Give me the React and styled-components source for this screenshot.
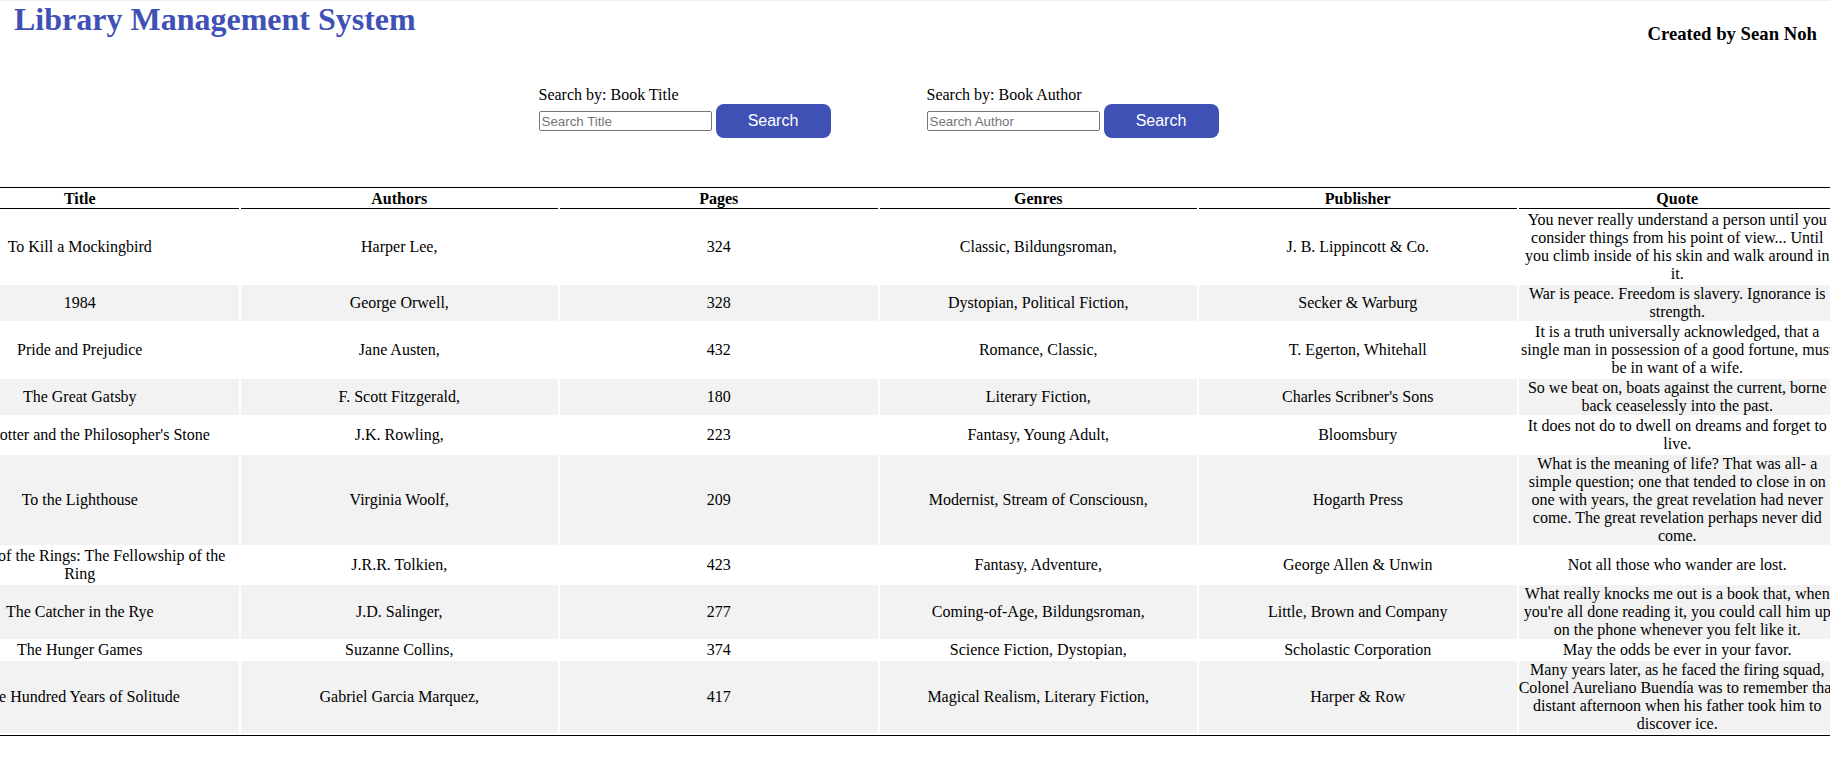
import React from "react";
import styled, { createGlobalStyle } from "styled-components";

const GlobalStyle = createGlobalStyle`
  html, body {
    margin: 0;
    padding: 0;
    overflow-x: hidden;
    background: #ffffff;
  }
  body {
    font-family: "Liberation Serif", "Times New Roman", serif;
    color: #000;
  }
`;

const Page = styled.div`
  border-top: 1px solid #eeeeee;
`;

const Header = styled.header`
  display: flex;
  justify-content: space-between;
  align-items: flex-start;
  padding: 0 13px 0 14px;
`;

const AppTitle = styled.h1`
  margin: 0;
  font-size: 32px;
  font-weight: bold;
  color: #3f51b5;
`;

const Credit = styled.h3`
  margin: 22px 0 0;
  font-size: 18.72px;
  font-weight: bold;
`;

const Content = styled.main`
  width: 1919px;
  margin-left: -81px;
`;

const SearchBar = styled.section`
  display: flex;
  justify-content: center;
  gap: 96px;
  margin-top: 41px;
`;

const SearchGroup = styled.div`
  display: flex;
  flex-direction: column;
`;

const Label = styled.label`
  font-size: 16px;
  line-height: 18px;
`;

const SearchRow = styled.div`
  display: flex;
  align-items: center;
  gap: 4px;
`;

const Input = styled.input`
  box-sizing: border-box;
  width: 173px;
  height: 20px;
  padding: 1px 2px;
  border: 1px solid #767676;
  border-radius: 2px;
  font-family: "Liberation Sans", Arial, sans-serif;
  font-size: 13.33px;
  &::placeholder {
    color: #757575;
  }
`;

const Button = styled.button`
  width: 115px;
  height: 34px;
  border: none;
  border-radius: 8px;
  background: #3f51b5;
  color: #ffffff;
  font-family: "Liberation Sans", Arial, sans-serif;
  font-size: 16px;
  cursor: pointer;
`;

const Table = styled.table`
  width: 100%;
  table-layout: fixed;
  border-spacing: 2px;
  margin-top: 49px;
  border-top: 1px solid #000;
  border-bottom: 1px solid #000;
  font-size: 16px;
  line-height: 18px;
`;

const Th = styled.th`
  padding: 0;
  font-weight: bold;
  border-bottom: 1px solid #000;
  text-align: center;
`;

const Row = styled.tr`
  &:nth-child(even) td {
    background: #f2f2f2;
  }
`;

const Td = styled.td`
  padding: 0;
  text-align: center;
  vertical-align: middle;
`;

const books = [
  ["To Kill a Mockingbird", "Harper Lee,", 324, "Classic, Bildungsroman,", "J. B. Lippincott & Co.", "You never really understand a person until you consider things from his point of view... Until you climb inside of his skin and walk around in it."],
  ["1984", "George Orwell,", 328, "Dystopian, Political Fiction,", "Secker & Warburg", "War is peace. Freedom is slavery. Ignorance is strength."],
  ["Pride and Prejudice", "Jane Austen,", 432, "Romance, Classic,", "T. Egerton, Whitehall", "It is a truth universally acknowledged, that a single man in possession of a good fortune, must be in want of a wife."],
  ["The Great Gatsby", "F. Scott Fitzgerald,", 180, "Literary Fiction,", "Charles Scribner's Sons", "So we beat on, boats against the current, borne back ceaselessly into the past."],
  ["Harry Potter and the Philosopher's Stone", "J.K. Rowling,", 223, "Fantasy, Young Adult,", "Bloomsbury", "It does not do to dwell on dreams and forget to live."],
  ["To the Lighthouse", "Virginia Woolf,", 209, "Modernist, Stream of Consciousn,", "Hogarth Press", "What is the meaning of life? That was all- a simple question; one that tended to close in on one with years, the great revelation had never come. The great revelation perhaps never did come."],
  ["The Lord of the Rings: The Fellowship of the Ring", "J.R.R. Tolkien,", 423, "Fantasy, Adventure,", "George Allen & Unwin", "Not all those who wander are lost."],
  ["The Catcher in the Rye", "J.D. Salinger,", 277, "Coming-of-Age, Bildungsroman,", "Little, Brown and Company", "What really knocks me out is a book that, when you're all done reading it, you could call him up on the phone whenever you felt like it."],
  ["The Hunger Games", "Suzanne Collins,", 374, "Science Fiction, Dystopian,", "Scholastic Corporation", "May the odds be ever in your favor."],
  ["One Hundred Years of Solitude", "Gabriel Garcia Marquez,", 417, "Magical Realism, Literary Fiction,", "Harper & Row", "Many years later, as he faced the firing squad, Colonel Aureliano Buendía was to remember that distant afternoon when his father took him to discover ice."],
];

const columns = ["Title", "Authors", "Pages", "Genres", "Publisher", "Quote"];

function SearchField({ label, placeholder }) {
  return (
    <SearchGroup>
      <Label>{label}</Label>
      <SearchRow>
        <Input placeholder={placeholder} />
        <Button>Search</Button>
      </SearchRow>
    </SearchGroup>
  );
}

export default function App() {
  return (
    <Page>
      <GlobalStyle />
      <Header>
        <AppTitle>Library Management System</AppTitle>
        <Credit>Created by Sean Noh</Credit>
      </Header>
      <Content>
        <SearchBar>
          <SearchField label="Search by: Book Title" placeholder="Search Title" />
          <SearchField label="Search by: Book Author" placeholder="Search Author" />
        </SearchBar>
        <Table>
          <thead>
            <tr>
              {columns.map((c) => (
                <Th key={c}>{c}</Th>
              ))}
            </tr>
          </thead>
          <tbody>
            {books.map((b) => (
              <Row key={b[0]}>
                {b.map((cell, i) => (
                  <Td key={i}>{cell}</Td>
                ))}
              </Row>
            ))}
          </tbody>
        </Table>
      </Content>
    </Page>
  );
}
